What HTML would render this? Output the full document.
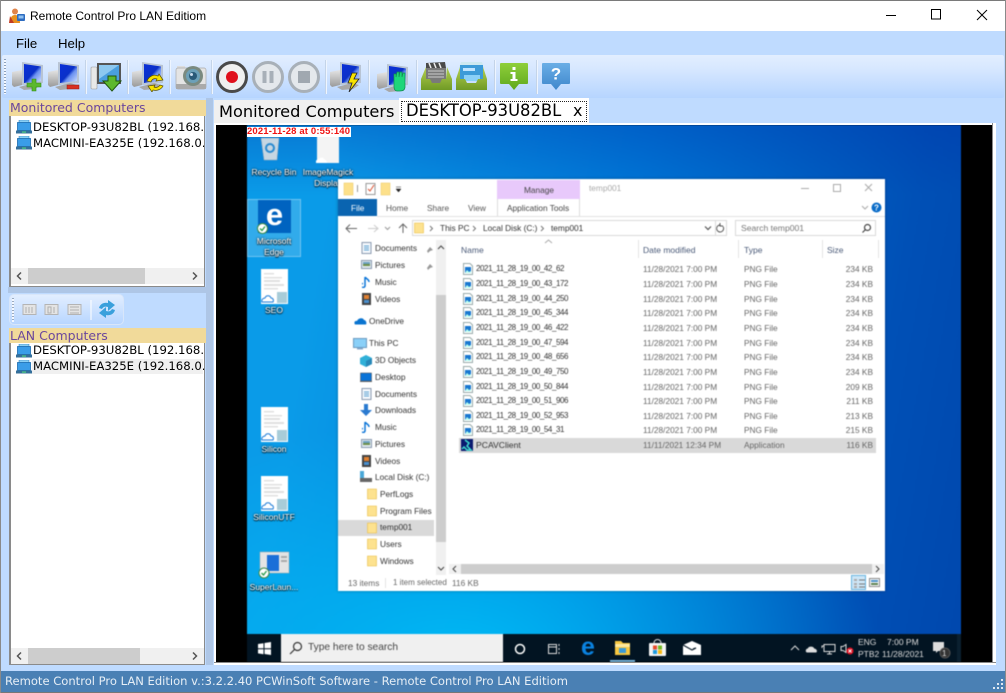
<!DOCTYPE html>
<html><head><meta charset="utf-8"><title>Remote Control Pro LAN Editiom</title>
<style>
html,body{margin:0;padding:0;width:1006px;height:693px;overflow:hidden;background:#bfdbff}
*{box-sizing:border-box}
.a,.t,svg.i{position:absolute}
.t{white-space:nowrap}
body{font-family:"Liberation Sans",sans-serif}
.d{font-family:"DejaVu Sans",sans-serif}
#remote{position:absolute;left:216px;top:125px;width:776px;height:537px;background:#000;overflow:hidden}
#inner{position:absolute;left:-216px;top:-125px;width:1006px;height:693px;filter:blur(.42px)}
#inner .t{font-size:8.3px;line-height:12px;color:#333}
#inner .l{color:#fff;text-shadow:0 0 2px #000,0 1px 1px #000;text-align:center;width:60px;font-size:8.5px}
#inner .g{color:#666}
#inner .b{color:#4a5a78;font-size:8.5px}
#inner .n{font-size:8px;letter-spacing:-.42px}
#inner .s{width:30px;left:843px;text-align:right}
.sep{position:absolute;top:60px;width:2px;height:34px;background:#eef5ff;border-left:1px solid #c4d4e8}
</style></head><body>
<svg width="0" height="0" style="position:absolute"><defs>
<linearGradient id="scr" x1="0" y1="0" x2="1" y2="1"><stop offset="0" stop-color="#0a30d8"/><stop offset=".5" stop-color="#0a30c8"/><stop offset=".62" stop-color="#6a90f0"/><stop offset="1" stop-color="#cfe0ff"/></linearGradient>
<linearGradient id="gry" x1="0" y1="0" x2="0" y2="1"><stop offset="0" stop-color="#e4e4e4"/><stop offset="1" stop-color="#9a9a9a"/></linearGradient>
<linearGradient id="tray" x1="0" y1="0" x2="0" y2="1"><stop offset="0" stop-color="#b5cf50"/><stop offset="1" stop-color="#6f9a25"/></linearGradient>
<linearGradient id="ig" x1="0" y1="0" x2="0" y2="1"><stop offset="0" stop-color="#8fcf3a"/><stop offset="1" stop-color="#5fa81e"/></linearGradient>
<linearGradient id="hb" x1="0" y1="0" x2="0" y2="1"><stop offset="0" stop-color="#6aaee6"/><stop offset="1" stop-color="#3f87cc"/></linearGradient>
<symbol id="pc" viewBox="0 0 32 32">
<path d="M0 12l10-2v15l-8 2-2-2z" fill="url(#gry)"/>
<path d="M10 2l21 3v18l-21 2z" fill="#b8c4d4"/>
<path d="M12 4l17 2.500v14.500l-17 2z" fill="url(#scr)"/>
<path d="M7 27l15-4 7 2-6 4-11 1z" fill="#a8a8a8"/>
</symbol>
<symbol id="fp" viewBox="0 0 10 12"><path d="M.5.500h6.500l2.500 2.500v8.500h-9z" fill="#fff" stroke="#9aa"/><rect x="2" y="4" width="6" height="6" fill="#1877d0"/><path d="M2 10l2-3 2 2 2-1v2z" fill="#bfe"/></symbol>
<symbol id="fo" viewBox="0 0 10 12"><path d="M.5 1h9v10h-9z" fill="#fcd770" stroke="#e8c050" stroke-width=".6"/><rect x="1" y="1.500" width="8" height="9" fill="#fde28f"/></symbol>
<symbol id="dc" viewBox="0 0 27 35"><rect width="27" height="35" fill="#fff"/><g fill="#e0e0e0"><rect x="3" y="4" width="10" height="1.500"/><rect x="3" y="8" width="18" height="1.500"/><rect x="3" y="11" width="16" height="2"/><rect x="3" y="15" width="20" height="2"/><rect x="3" y="19" width="14" height="1.500"/></g><rect x="16" y="23" width="10" height="11" fill="#a8ccd8"/><path d="M1 33c-1-3 2-4 3-4 1-3 5-3 6 0 2 0 3 2 2 4z" fill="#fff" stroke="#1a7ad8" stroke-width="1"/></symbol>
<symbol id="lpc" viewBox="0 0 16 14"><rect x="3" y="0" width="10" height="3" fill="#8ad0f5" stroke="#2a7ab8" stroke-width=".5"/><rect x="1.500" y="2.500" width="13" height="8" fill="#3a9de8" stroke="#1b6cb0" stroke-width=".8"/><rect x="0" y="10.500" width="16" height="3" fill="#356f9a"/><rect x="6" y="11.500" width="4" height="1.200" fill="#4fd080"/></symbol>
</defs></svg>

<!-- title bar -->
<div class="a" style="left:0;top:0;width:1006px;height:31px;background:#fff;border-top:1px solid #7a7a7a"></div>
<div class="a" style="left:0;top:0;width:1px;height:693px;background:#8a8a8a;z-index:9"></div>
<div class="a" style="left:1005px;top:0;width:1px;height:693px;background:#8a8a8a;z-index:9"></div>
<svg class="i" style="left:9px;top:8px" width="17" height="16" viewBox="0 0 17 16"><circle cx="6" cy="3.500" r="3" fill="#e0844a"/><path d="M1 15c0-6 2-8 5-8s5 2 5 8z" fill="#e8901e"/><path d="M1 8l4 7H0z" fill="#c23b22"/><rect x="8" y="6" width="8" height="7" rx="1" fill="#2d6cc0"/><rect x="9.500" y="7.500" width="5" height="3" fill="#8fc0f0"/></svg>
<div class="t" style="left:30px;top:9px;font-size:12px;line-height:14px;color:#000">Remote Control Pro LAN Editiom</div>
<svg class="i" style="left:885px;top:9px" width="110" height="13" viewBox="0 0 110 13" fill="none" stroke="#000"><path d="M1 6.500h10" /><rect x="46.500" y=".5" width="9" height="9.500" stroke-width="1"/><path d="M92 1l10 10M102 1l-10 10"/></svg>

<!-- menu -->
<div class="a" style="left:1px;top:31px;width:1004px;height:24px;background:#bfdbff"></div>
<div class="t" style="left:16px;top:36px;font-size:13.200px;line-height:15px;color:#000">File</div>
<div class="t" style="left:58px;top:36px;font-size:13.200px;line-height:15px;color:#000">Help</div>

<!-- toolbar -->
<div class="a" style="left:2px;top:55px;width:1002px;height:43px;background:linear-gradient(#e2eeff,#d8e8ff 30%,#b6d5ff);border-radius:2px"></div>
<div class="a" style="left:4px;top:59px;width:2px;height:35px;background:repeating-linear-gradient(#8ca0bc 0 1px,#f4f8ff 1px 3px)"></div>
<svg class="i" style="left:12px;top:60px" width="32" height="32"><use href="#pc"/><path d="M20 20h4v4h5v4h-5v4h-4v-4h-5v-4h5z" fill="#5cb82e" stroke="#2f8a18" stroke-width=".6" transform="translate(0,-1)"/></svg>
<svg class="i" style="left:48px;top:60px" width="32" height="32"><use href="#pc"/><rect x="19" y="25" width="12" height="4" fill="#d83020" stroke="#901810" stroke-width=".5"/></svg>
<div class="sep" style="left:85px"></div>
<svg class="i" style="left:90px;top:61px" width="32" height="32" viewBox="0 0 32 32"><rect x="1" y="6" width="6" height="22" rx="1" fill="#e8e8e8" stroke="#999" stroke-width=".6"/><rect x="7" y="2" width="24" height="21" fill="#555" /><rect x="9" y="4" width="20" height="17" fill="#4a9fe0"/><path d="M9 4h20L9 18z" fill="#8cc8f0"/><path d="M18 15h8v5h5L22 30l-9-10h5z" fill="#5cb82e" stroke="#20560e" stroke-width="1"/></svg>
<div class="sep" style="left:127px"></div>
<svg class="i" style="left:132px;top:60px" width="32" height="32"><use href="#pc"/><path d="M15 21c2-5 7-7 11-5l1-2 4 6-7 1 1-2c-3-1-5 0-6 3zM31 26c-2 4-7 5-10 4l-1 2-4-6 7-1-1 2c2 1 5 0 6-2z" fill="#f7e200" stroke="#5a5000" stroke-width=".7"/></svg>
<div class="sep" style="left:169px"></div>
<svg class="i" style="left:175px;top:62px" width="32" height="30" viewBox="0 0 32 30"><rect x="2" y="4" width="8" height="4" fill="#ddd"/><rect x="1" y="6" width="30" height="21" rx="2" fill="#e4e4e4" stroke="#aaa" stroke-width=".7"/><rect x="1" y="22" width="30" height="5" fill="#aaa"/><circle cx="18" cy="14" r="10" fill="#7a8a80"/><circle cx="18" cy="14" r="7" fill="#6ca0b8"/><circle cx="18" cy="14" r="4" fill="#2a5a78"/><circle cx="16.500" cy="12.500" r="1.500" fill="#cde"/></svg>
<div class="sep" style="left:211px"></div>
<svg class="i" style="left:215px;top:60px" width="106" height="34" viewBox="0 0 106 34">
<circle cx="17" cy="17" r="14.500" fill="#f0f0f0" stroke="#4a4a4a" stroke-width="3"/><circle cx="17" cy="17" r="6" fill="#e0101c"/>
<circle cx="53" cy="17" r="14.500" fill="#e4e8ec" stroke="#a8b0b8" stroke-width="3"/><rect x="47.500" y="11" width="4" height="12" fill="#a8b0b8"/><rect x="54.500" y="11" width="4" height="12" fill="#a8b0b8"/>
<circle cx="89" cy="17" r="14.500" fill="#e4e8ec" stroke="#a8b0b8" stroke-width="3"/><rect x="83" y="11" width="12" height="12" fill="#a0a8b0"/></svg>
<div class="sep" style="left:325px"></div>
<svg class="i" style="left:330px;top:60px" width="32" height="32"><use href="#pc"/><path d="M22 13l-4 10h4l-3 9 10-13h-5l3-6z" fill="#f7e200" stroke="#222" stroke-width=".8"/></svg>
<div class="sep" style="left:368px"></div>
<svg class="i" style="left:377px;top:62px" width="32" height="32"><use href="#pc"/><path d="M17 17v-5h2v3l1-5h2v5l1-5h2v5l1-4h2v14c0 3-2 4-5 4h-3c-2 0-3-2-3-4z" fill="#1ed67a" stroke="#128a50" stroke-width=".7"/></svg>
<div class="sep" style="left:416px"></div>
<svg class="i" style="left:421px;top:61px" width="31" height="32" viewBox="0 0 31 32"><path d="M5 2l19-1 1 6H5z" fill="#4a4a4a"/><path d="M8 2l2 5M13 2l2 5M18 2l2 5" stroke="#eee" stroke-width="1.500"/><rect x="5" y="7" width="20" height="15" fill="#7a7a7a"/><path d="M7 10h16M7 13h16M7 16h16" stroke="#ccc"/><path d="M5 6L0 18v11h31V18L26 6l-1 12h-4l-2 4h-8l-2-4H5z" fill="url(#tray)"/></svg>
<svg class="i" style="left:456px;top:61px" width="31" height="32" viewBox="0 0 31 32"><path d="M5 1h21l2 6H3z" fill="#cde8f0"/><rect x="4" y="4" width="23" height="16" fill="#3d9bd8"/><rect x="7" y="7" width="12" height="3" fill="#bfe4ff"/><rect x="8" y="14" width="16" height="6" fill="#8ad0f8"/><path d="M4 6L0 18v11h31V18L27 6v12h-5l-2 4h-9l-2-4H4z" fill="url(#tray)"/></svg>
<div class="sep" style="left:494px"></div>
<svg class="i" style="left:500px;top:63px" width="28" height="28" viewBox="0 0 28 28"><path d="M1 0h26a1 1 0 011 1v19a1 1 0 01-1 1h-8l-5 6-5-6H1a1 1 0 01-1-1V1a1 1 0 011-1z" fill="url(#ig)"/><rect x="12.500" y="4" width="3" height="3" fill="#fff"/><path d="M10.500 9h5v7h2v2h-7v-2h2v-5h-2z" fill="#fff"/></svg>
<div class="sep" style="left:536px"></div>
<svg class="i" style="left:542px;top:63px" width="28" height="28" viewBox="0 0 28 28"><path d="M1 0h26a1 1 0 011 1v19a1 1 0 01-1 1h-8l-5 6-5-6H1a1 1 0 01-1-1V1a1 1 0 011-1z" fill="url(#hb)"/><text x="14" y="16.500" font-size="17" font-weight="bold" text-anchor="middle" fill="#fff" font-family="Liberation Sans">?</text></svg>

<!-- left panels -->
<div class="a" style="left:206px;top:98px;width:7px;height:567px;background:#aec6e6"></div>
<div class="a" style="left:9px;top:100px;width:197px;height:16px;background:#f1da9a"></div>
<div class="t d" style="left:10px;top:100px;font-size:12.500px;line-height:16px;color:#6b479c">Monitored Computers</div>
<div class="a" style="left:9px;top:116px;width:196px;height:171px;background:#fff;border:1px solid #8a8a8a;border-top:0;border-left:2px solid #8a8a8a"></div>
<svg class="i" style="left:16px;top:120px" width="16" height="14"><use href="#lpc"/></svg>
<svg class="i" style="left:16px;top:136px" width="16" height="14"><use href="#lpc"/></svg>
<div class="a" style="left:33px;top:120px;width:171px;height:32px;overflow:hidden"><div class="t d" style="left:0;top:0;font-size:11.700px;line-height:15px;color:#000">DESKTOP-93U82BL (192.168.0.101)</div><div class="t d" style="left:0;top:16px;font-size:11.700px;line-height:15px;color:#000">MACMINI-EA325E (192.168.0.102)</div></div>
<div class="a" style="left:11px;top:268px;width:193px;height:16px;background:#f0f0f0"></div>
<div class="a" style="left:28px;top:268px;width:117px;height:16px;background:#cdcdcd"></div>
<svg class="i" style="left:11px;top:268px" width="193" height="16" fill="none" stroke="#555" stroke-width="1.500"><path d="M10 4.500L6.500 8l3.500 3.500M182 4.500l3.500 3.500-3.500 3.500"/></svg>

<div class="a" style="left:8px;top:287px;width:198px;height:6px;background:#aec6e6"></div>
<div class="a" style="left:9px;top:294px;width:115px;height:31px;border-radius:5px;background:linear-gradient(#e2eeff,#b8d6ff);border:1px solid #d8e6fa"></div>
<div class="a" style="left:12px;top:298px;width:2px;height:24px;background:repeating-linear-gradient(#9aaac0 0 1px,#f4f8ff 1px 3px)"></div>
<svg class="i" style="left:20px;top:300px" width="100" height="20" viewBox="0 0 100 20"><g fill="#e4e4e4" stroke="#b4b4b4"><rect x="3" y="4.500" width="13" height="10"/><rect x="25" y="4.500" width="13" height="10"/><rect x="48" y="4.500" width="13" height="10"/></g><path d="M6 7v6M9 7v6M12 7v6M28 7v6h3V7zM34 7v6M50 7h9M50 10h9M50 13h9" stroke="#b0b0b0" fill="none"/><rect x="70.500" y="-2" width="1" height="22" fill="#fff" /><path d="M79 8c1-4 5-6 9-5V0l7 5-7 6V7c-3-1-5 0-6 2zM95 10c-1 4-5 6-9 5v3l-7-5 7-6v4c3 1 5 0 6-2z" fill="#3aa0dc"/></svg>

<div class="a" style="left:9px;top:328px;width:197px;height:15px;background:#f1da9a"></div>
<div class="t d" style="left:10px;top:328px;font-size:12.500px;line-height:16px;color:#6b479c">LAN Computers</div>
<div class="a" style="left:9px;top:343px;width:196px;height:322px;background:#fff;border:1px solid #8a8a8a;border-top:0;border-left:2px solid #8a8a8a"></div>
<div class="a" style="left:32px;top:359px;width:171px;height:15px;background:#f0f0f0"></div>
<svg class="i" style="left:16px;top:344px" width="16" height="14"><use href="#lpc"/></svg>
<svg class="i" style="left:16px;top:360px" width="16" height="14"><use href="#lpc"/></svg>
<div class="a" style="left:33px;top:343px;width:171px;height:32px;overflow:hidden"><div class="t d" style="left:0;top:0;font-size:11.700px;line-height:15px;color:#000">DESKTOP-93U82BL (192.168.0.101)</div><div class="t d" style="left:0;top:16px;font-size:11.700px;line-height:15px;color:#000">MACMINI-EA325E (192.168.0.102)</div></div>
<div class="a" style="left:11px;top:648px;width:193px;height:16px;background:#f0f0f0"></div>
<div class="a" style="left:28px;top:648px;width:112px;height:16px;background:#cdcdcd"></div>
<svg class="i" style="left:11px;top:648px" width="193" height="16" fill="none" stroke="#555" stroke-width="1.500"><path d="M10 4.500L6.500 8l3.500 3.500M182 4.500l3.500 3.500-3.500 3.500"/></svg>

<!-- tabs -->
<div class="a" style="left:214px;top:100px;width:186px;height:25px;background:#f0f0f0"></div>
<div class="t d" style="left:219px;top:102px;font-size:16.200px;line-height:20px;color:#000">Monitored Computers</div>
<div class="a" style="left:399px;top:98px;width:190px;height:27px;background:#fff"></div>
<div class="a" style="left:401px;top:101px;width:186px;height:21px;border:1px dotted #222"></div>
<div class="t d" style="left:406px;top:101px;font-size:16.400px;line-height:20px;color:#000">DESKTOP-93U82BL</div>
<div class="t d" style="left:573px;top:101px;font-size:16px;line-height:20px;color:#000">x</div>
<div class="a" style="left:214px;top:123px;width:782px;height:542px;background:#fff"></div>

<!-- remote screen -->
<div id="remote"><div id="inner">
<div class="a" style="left:247px;top:125px;width:714px;height:509px;background:radial-gradient(420px 240px at 30% 105%,#00baf5 0,rgba(0,170,240,0) 100%),linear-gradient(100deg,#0a9be8 0,#0a9be8 12%,#0076d6 50%,#0050b6 85%,#0048ae 100%)"></div>
<div class="a" style="left:247px;top:125px;width:714px;height:70px;background:linear-gradient(rgba(0,50,170,.32),rgba(0,60,180,0))"></div>

<!-- desktop icons -->
<svg class="i" style="left:260px;top:136px" width="20" height="25" viewBox="0 0 20 25"><path d="M1 2h18l-2 22H4z" fill="#c6d6e2" stroke="#8fa4b6" stroke-width=".5"/><circle cx="10" cy="12" r="4" fill="none" stroke="#2a8ad0" stroke-width="2"/></svg>
<div class="t l" style="left:244px;top:166px">Recycle Bin</div>
<svg class="i" style="left:316px;top:136px" width="24" height="27" viewBox="0 0 24 27"><rect x="1" width="22" height="27" fill="#f4f4f4"/><path d="M0 27c-1-3 2-4 3-4 1-2 5-2 6 1 1 0 2 1 2 3z" fill="#fff"/></svg>
<div class="t l" style="left:298px;top:166px">ImageMagick</div>
<div class="t l" style="left:298px;top:177px">Display</div>
<div class="a" style="left:247px;top:199px;width:54px;height:58px;background:rgba(255,255,255,.16);border:1px solid rgba(255,255,255,.3)"></div>
<div class="a" style="left:258px;top:200px;width:33px;height:33px;background:#0063c0"></div>
<div class="t" style="left:258px;top:198px;width:33px;height:33px;font:bold 31px/33px 'Liberation Sans';text-align:center"><span style="color:#fff;font-size:31px">e</span></div>
<svg class="i" style="left:257px;top:223px" width="11" height="11"><circle cx="5.500" cy="5.500" r="5" fill="#fff" stroke="#3a8a4a"/><path d="M3 5.500l2 2 3-4" stroke="#2a9a4a" fill="none" stroke-width="1.300"/></svg>
<div class="t l" style="left:244px;top:235px">Microsoft</div>
<div class="t l" style="left:244px;top:246px">Edge</div>
<svg class="i" style="left:261px;top:269px" width="27" height="35"><use href="#dc"/></svg>
<div class="t l" style="left:244px;top:304px">SEO</div>
<svg class="i" style="left:261px;top:407px" width="27" height="35"><use href="#dc"/></svg>
<div class="t l" style="left:244px;top:443px">Silicon</div>
<svg class="i" style="left:261px;top:476px" width="27" height="35"><use href="#dc"/></svg>
<div class="t l" style="left:244px;top:511px">SiliconUTF</div>
<svg class="i" style="left:258px;top:551px" width="32" height="28" viewBox="0 0 32 28"><rect x="2" y="1" width="29" height="21" fill="#e4e4e4" stroke="#aaa" stroke-width=".5"/><rect x="9" y="4" width="12" height="16" fill="#1a6fd8"/><rect x="23" y="5" width="6" height="2" fill="#aaa"/><rect x="23" y="9" width="6" height="2" fill="#aaa"/><circle cx="6" cy="22" r="5" fill="#fff" stroke="#3a8a4a"/><path d="M3.500 22l2 2 3-4" stroke="#2a9a4a" fill="none" stroke-width="1.300"/></svg>
<div class="t l" style="left:244px;top:581px">SuperLaun...</div>

<!-- explorer -->
<div class="a" style="left:338px;top:179px;width:547px;height:412px;background:#fff;box-shadow:0 0 3px rgba(0,0,0,.3)"></div>
<svg class="i" style="left:343px;top:182px" width="64" height="14" viewBox="0 0 64 14"><rect x="1" y="1" width="9" height="12" fill="#fde08a" stroke="#eac860" stroke-width=".5"/><rect x="14" y="3" width="1" height="7" fill="#999"/><rect x="23" y="1.500" width="9" height="11" fill="#fff" stroke="#999"/><path d="M25 7l2 2 4-6" fill="none" stroke="#d85030"/><rect x="38" y="1" width="9" height="12" fill="#fde08a" stroke="#eac860" stroke-width=".5"/><path d="M53 5h5M53 7h5l-2.500 3z" fill="#222" stroke="#222" stroke-width=".5"/></svg>
<div class="a" style="left:497px;top:180px;width:83px;height:19px;background:#e8c9fb"></div>
<div class="t" style="left:524px;top:184px;color:#444">Manage</div>
<div class="t" style="left:589px;top:182px;color:#aaa">temp001</div>
<svg class="i" style="left:800px;top:182px" width="80" height="12" fill="none" stroke="#aaa"><path d="M1 6.500h8M33.500 2.500h7v7h-7zM65 2l7 7M72 2l-7 7"/></svg>
<div class="a" style="left:338px;top:199px;width:39px;height:17px;background:#0a64b0"></div>
<div class="t" style="left:351px;top:202px;color:#fff">File</div>
<div class="t" style="left:386px;top:202px;color:#555">Home</div>
<div class="t" style="left:427px;top:202px;color:#555">Share</div>
<div class="t" style="left:468px;top:202px;color:#555">View</div>
<div class="t" style="left:507px;top:202px;color:#444">Application Tools</div>
<div class="a" style="left:497px;top:199px;width:1px;height:17px;background:#ddd"></div>
<div class="a" style="left:579px;top:199px;width:1px;height:17px;background:#ddd"></div>
<div class="a" style="left:377px;top:216px;width:508px;height:1px;background:#e2e2e2"></div>
<svg class="i" style="left:861px;top:201px" width="22" height="14"><path d="M1 5l3 3 3-3" fill="none" stroke="#aaa"/><circle cx="15.500" cy="6.500" r="5" fill="#0a6cc8"/><text x="15.500" y="9.500" font-size="8" font-weight="bold" fill="#fff" text-anchor="middle" font-family="Liberation Sans">?</text></svg>
<!-- address -->
<svg class="i" style="left:344px;top:222px" width="66" height="13" fill="none" stroke="#666"><path d="M2 6.500h11M6 2.500l-4 4 4 4M59 11V2M55 6l4-4 4 4"/><path d="M24 6.500h10M30 3l4 3.500-4 3.500" stroke="#ccc"/><path d="M41 5l2.500 2.500L46 5" stroke="#999"/></svg>
<div class="a" style="left:412px;top:220px;width:315px;height:16px;border:1px solid #d9d9d9"></div>
<div class="a" style="left:715px;top:220px;width:1px;height:16px;background:#d9d9d9"></div>
<svg class="i" style="left:414px;top:222px" width="10" height="12"><use href="#fo"/></svg>
<svg class="i" style="left:428px;top:222px" width="125" height="12" fill="none" stroke="#777"><path d="M2 4l2.500 2.500L2 9M45 4l2.500 2.500L45 9M113 4l2.500 2.500L113 9"/></svg>
<div class="t" style="left:440px;top:222px">This PC</div>
<div class="t" style="left:483px;top:222px">Local Disk (C:)</div>
<div class="t" style="left:551px;top:222px">temp001</div>
<svg class="i" style="left:704px;top:222px" width="22" height="12" fill="none" stroke="#555"><path d="M1 4.500l3 3 3-3" stroke-width="1.200"/><path d="M19 4.500a3.500 3.500 0 11-3-1.500M16 1v3h3"/></svg>
<div class="a" style="left:735px;top:220px;width:141px;height:16px;border:1px solid #d9d9d9"></div>
<div class="t" style="left:741px;top:222px;color:#777;font-size:8.600px">Search temp001</div>
<svg class="i" style="left:861px;top:223px" width="11" height="11" fill="none" stroke="#444" stroke-width="1.200"><circle cx="6.500" cy="4.500" r="3"/><path d="M4.500 6.500l-3 3"/></svg>
<!-- headers -->
<svg class="i" style="left:544px;top:239px" width="9" height="5" fill="none" stroke="#aaa"><path d="M1 4l3.500-3L8 4"/></svg>
<div class="t b" style="left:461px;top:244px">Name</div>
<div class="t b" style="left:643px;top:244px">Date modified</div>
<div class="t b" style="left:744px;top:244px">Type</div>
<div class="t b" style="left:827px;top:244px">Size</div>
<div class="a" style="left:638px;top:240px;width:1px;height:18px;background:#e4e4e4"></div>
<div class="a" style="left:738px;top:240px;width:1px;height:18px;background:#e4e4e4"></div>
<div class="a" style="left:822px;top:240px;width:1px;height:18px;background:#e4e4e4"></div>
<div class="a" style="left:878px;top:240px;width:1px;height:18px;background:#e4e4e4"></div>
<!-- rows -->
<div class="a" style="left:459px;top:438px;width:417px;height:15px;background:#d9d9d9"></div>
<svg class="i" style="left:463px;top:263px" width="10" height="12"><use href="#fp"/></svg><div class="t n" style="left:476px;top:263px">2021_11_28_19_00_42_62</div><div class="t g" style="left:643px;top:263px">11/28/2021 7:00 PM</div><div class="t g" style="left:744px;top:263px">PNG File</div><div class="t g s" style="top:263px">234 KB</div>
<svg class="i" style="left:463px;top:278px" width="10" height="12"><use href="#fp"/></svg><div class="t n" style="left:476px;top:278px">2021_11_28_19_00_43_172</div><div class="t g" style="left:643px;top:278px">11/28/2021 7:00 PM</div><div class="t g" style="left:744px;top:278px">PNG File</div><div class="t g s" style="top:278px">234 KB</div>
<svg class="i" style="left:463px;top:293px" width="10" height="12"><use href="#fp"/></svg><div class="t n" style="left:476px;top:293px">2021_11_28_19_00_44_250</div><div class="t g" style="left:643px;top:293px">11/28/2021 7:00 PM</div><div class="t g" style="left:744px;top:293px">PNG File</div><div class="t g s" style="top:293px">234 KB</div>
<svg class="i" style="left:463px;top:307px" width="10" height="12"><use href="#fp"/></svg><div class="t n" style="left:476px;top:307px">2021_11_28_19_00_45_344</div><div class="t g" style="left:643px;top:307px">11/28/2021 7:00 PM</div><div class="t g" style="left:744px;top:307px">PNG File</div><div class="t g s" style="top:307px">234 KB</div>
<svg class="i" style="left:463px;top:322px" width="10" height="12"><use href="#fp"/></svg><div class="t n" style="left:476px;top:322px">2021_11_28_19_00_46_422</div><div class="t g" style="left:643px;top:322px">11/28/2021 7:00 PM</div><div class="t g" style="left:744px;top:322px">PNG File</div><div class="t g s" style="top:322px">234 KB</div>
<svg class="i" style="left:463px;top:337px" width="10" height="12"><use href="#fp"/></svg><div class="t n" style="left:476px;top:337px">2021_11_28_19_00_47_594</div><div class="t g" style="left:643px;top:337px">11/28/2021 7:00 PM</div><div class="t g" style="left:744px;top:337px">PNG File</div><div class="t g s" style="top:337px">234 KB</div>
<svg class="i" style="left:463px;top:351px" width="10" height="12"><use href="#fp"/></svg><div class="t n" style="left:476px;top:351px">2021_11_28_19_00_48_656</div><div class="t g" style="left:643px;top:351px">11/28/2021 7:00 PM</div><div class="t g" style="left:744px;top:351px">PNG File</div><div class="t g s" style="top:351px">234 KB</div>
<svg class="i" style="left:463px;top:366px" width="10" height="12"><use href="#fp"/></svg><div class="t n" style="left:476px;top:366px">2021_11_28_19_00_49_750</div><div class="t g" style="left:643px;top:366px">11/28/2021 7:00 PM</div><div class="t g" style="left:744px;top:366px">PNG File</div><div class="t g s" style="top:366px">234 KB</div>
<svg class="i" style="left:463px;top:381px" width="10" height="12"><use href="#fp"/></svg><div class="t n" style="left:476px;top:381px">2021_11_28_19_00_50_844</div><div class="t g" style="left:643px;top:381px">11/28/2021 7:00 PM</div><div class="t g" style="left:744px;top:381px">PNG File</div><div class="t g s" style="top:381px">209 KB</div>
<svg class="i" style="left:463px;top:395px" width="10" height="12"><use href="#fp"/></svg><div class="t n" style="left:476px;top:395px">2021_11_28_19_00_51_906</div><div class="t g" style="left:643px;top:395px">11/28/2021 7:00 PM</div><div class="t g" style="left:744px;top:395px">PNG File</div><div class="t g s" style="top:395px">211 KB</div>
<svg class="i" style="left:463px;top:410px" width="10" height="12"><use href="#fp"/></svg><div class="t n" style="left:476px;top:410px">2021_11_28_19_00_52_953</div><div class="t g" style="left:643px;top:410px">11/28/2021 7:00 PM</div><div class="t g" style="left:744px;top:410px">PNG File</div><div class="t g s" style="top:410px">213 KB</div>
<svg class="i" style="left:463px;top:424px" width="10" height="12"><use href="#fp"/></svg><div class="t n" style="left:476px;top:424px">2021_11_28_19_00_54_31</div><div class="t g" style="left:643px;top:424px">11/28/2021 7:00 PM</div><div class="t g" style="left:744px;top:424px">PNG File</div><div class="t g s" style="top:424px">215 KB</div>
<svg class="i" style="left:461px;top:439px" width="12" height="12"><rect width="12" height="12" fill="#0a1a70"/><path d="M4 1l4 3-2 3 4 4H6L3 8 1 10" stroke="#3fe0d0" fill="none" stroke-width="1.500"/></svg><div class="t" style="left:476px;top:439px;font-size:8.600px">PCAVClient</div><div class="t g" style="left:643px;top:439px">11/11/2021 12:34 PM</div><div class="t g" style="left:744px;top:439px">Application</div><div class="t g s" style="top:439px">116 KB</div>
<!-- nav -->
<div class="a" style="left:338px;top:520px;width:96px;height:16px;background:#d9d9d9"></div>
<svg class="i" style="left:361px;top:242px" width="11" height="12"><rect x="1" y="0.500" width="9" height="11" fill="#f4f8fc" stroke="#8a9ab0"/><path d="M3 4h5M3 6h5M3 8h5" stroke="#5aa0d0"/></svg><div class="t" style="left:375px;top:242px">Documents</div>
<svg class="i" style="left:361px;top:259px" width="11" height="12"><rect x=".5" y="1.500" width="10" height="8" fill="#dfe8ee" stroke="#8a9ab0"/><rect x="2" y="3" width="7" height="2" fill="#6aa0c0"/><rect x="2" y="5" width="7" height="2" fill="#6f8f4a"/></svg><div class="t" style="left:375px;top:259px">Pictures</div>
<svg class="i" style="left:362px;top:276px" width="9" height="12"><path d="M3 1v8a2 2 0 11-2-1.500M3 1c1 2 4 2 4 5" fill="none" stroke="#0a74d8" stroke-width="1.500"/></svg><div class="t" style="left:375px;top:276px">Music</div>
<svg class="i" style="left:361px;top:293px" width="11" height="12"><rect x="1" y="0" width="9" height="12" fill="#444"/><rect x="3" y="2" width="5" height="4" fill="#e08030"/><rect x="3" y="7" width="5" height="3" fill="#4a90d0"/></svg><div class="t" style="left:375px;top:293px">Videos</div>
<svg class="i" style="left:425px;top:244px" width="9" height="26" fill="#999"><path d="M2 7l3-4 3 3-3 1-2 2zM2 24l3-4 3 3-3 1-2 2z"/></svg>
<svg class="i" style="left:354px;top:317px" width="13" height="8"><path d="M1 7.500c-1.500-2 0-4 2-3.500 1-3 6-4 7-1 2 0 3 3 2 4.500z" fill="#0a74d0"/></svg><div class="t" style="left:369px;top:315px">OneDrive</div>
<svg class="i" style="left:353px;top:338px" width="14" height="12"><rect x=".5" y=".5" width="13" height="9" fill="#8ad0f8" stroke="#6a9ac0"/><rect x="4" y="10" width="6" height="1.500" fill="#8ac"/></svg><div class="t" style="left:369px;top:337px">This PC</div>
<svg class="i" style="left:360px;top:355px" width="12" height="12"><path d="M6 0l6 3v6l-6 3-6-3V3z" fill="#30b0d8"/><path d="M6 12V6l6-3v6z" fill="#2888b8"/></svg><div class="t" style="left:375px;top:354px">3D Objects</div>
<svg class="i" style="left:360px;top:372px" width="12" height="11"><rect x=".5" y="1" width="11" height="8" fill="#0a74d8" stroke="#444" stroke-width=".5"/><rect x="0" y="9" width="12" height="1" fill="#666"/></svg><div class="t" style="left:375px;top:371px">Desktop</div>
<svg class="i" style="left:361px;top:388px" width="11" height="12"><rect x="1" y="0.500" width="9" height="11" fill="#f4f8fc" stroke="#8a9ab0"/><path d="M3 4h5M3 6h5M3 8h5" stroke="#5aa0d0"/></svg><div class="t" style="left:375px;top:388px">Documents</div>
<svg class="i" style="left:360px;top:404px" width="12" height="12"><path d="M4 0h4v6h4l-6 6-6-6h4z" fill="#2a7ad0"/></svg><div class="t" style="left:375px;top:404px">Downloads</div>
<svg class="i" style="left:362px;top:421px" width="9" height="12"><path d="M3 1v8a2 2 0 11-2-1.500M3 1c1 2 4 2 4 5" fill="none" stroke="#0a74d8" stroke-width="1.500"/></svg><div class="t" style="left:375px;top:421px">Music</div>
<svg class="i" style="left:361px;top:438px" width="11" height="12"><rect x=".5" y="1.500" width="10" height="8" fill="#dfe8ee" stroke="#8a9ab0"/><rect x="2" y="3" width="7" height="2" fill="#6aa0c0"/><rect x="2" y="5" width="7" height="2" fill="#6f8f4a"/></svg><div class="t" style="left:375px;top:438px">Pictures</div>
<svg class="i" style="left:361px;top:455px" width="11" height="12"><rect x="1" y="0" width="9" height="12" fill="#444"/><rect x="3" y="2" width="5" height="4" fill="#e08030"/><rect x="3" y="7" width="5" height="3" fill="#4a90d0"/></svg><div class="t" style="left:375px;top:455px">Videos</div>
<svg class="i" style="left:360px;top:471px" width="12" height="12"><rect x="0" y="0" width="4" height="7" fill="#4aa8d8"/><rect x="0" y="7" width="12" height="4" fill="#666"/></svg><div class="t" style="left:375px;top:471px">Local Disk (C:)</div>
<svg class="i" style="left:367px;top:488px" width="10" height="12"><use href="#fo"/></svg><div class="t" style="left:380px;top:488px">PerfLogs</div>
<svg class="i" style="left:367px;top:505px" width="10" height="12"><use href="#fo"/></svg><div class="t" style="left:380px;top:505px">Program Files</div>
<svg class="i" style="left:367px;top:522px" width="10" height="12"><use href="#fo"/></svg><div class="t" style="left:380px;top:521px">temp001</div>
<svg class="i" style="left:367px;top:538px" width="10" height="12"><use href="#fo"/></svg><div class="t" style="left:380px;top:538px">Users</div>
<svg class="i" style="left:367px;top:555px" width="10" height="12"><use href="#fo"/></svg><div class="t" style="left:380px;top:555px">Windows</div>
<!-- scrollbars -->
<div class="a" style="left:436px;top:240px;width:10px;height:335px;background:#f0f0f0"></div>
<div class="a" style="left:436px;top:295px;width:10px;height:247px;background:#cdcdcd"></div>
<svg class="i" style="left:436px;top:243px" width="10" height="332" fill="none" stroke="#444"><path d="M2 6l3-3 3 3M2 324l3 3 3-3"/></svg>
<div class="a" style="left:449px;top:564px;width:435px;height:10px;background:#f0f0f0"></div>
<div class="a" style="left:461px;top:564px;width:411px;height:10px;background:#cdcdcd"></div>
<svg class="i" style="left:449px;top:564px" width="435" height="10" fill="none" stroke="#444"><path d="M7 2L4 5l3 3M427 2l3 3-3 3"/></svg>
<div class="t g" style="left:348px;top:577px">13 items</div>
<div class="t g" style="left:393px;top:577px;font-size:8px">1 item selected</div>
<div class="t g" style="left:452px;top:577px">116 KB</div>
<div class="a" style="left:385px;top:578px;width:1px;height:10px;background:#e4e4e4"></div>
<div class="a" style="left:851px;top:575px;width:15px;height:15px;background:#cde6f7;border:1px solid #68b4e0"></div>
<svg class="i" style="left:853px;top:577px" width="28" height="12"><path d="M1 2h3v2H1zM1 6h3v2H1zM1 9h3v2H1z" fill="#aaa"/><path d="M6 3h6M6 7h6M6 10h6" stroke="#777"/><rect x="16.500" y="1.500" width="10" height="8" fill="#fff" stroke="#888"/><rect x="18" y="3" width="7" height="2" fill="#4a90c8"/><rect x="18" y="6" width="7" height="2" fill="#5a8050"/></svg>

<!-- taskbar -->
<div class="a" style="left:247px;top:634px;width:710px;height:28px;background:#021422"></div>
<svg class="i" style="left:258px;top:642px" width="13" height="13" fill="#fff"><path d="M0 2l5.500-.8v5H0zM6.500 1L13 0v6.200H6.500zM0 7.200h5.500v5L0 11.400zM6.500 7.200H13V13l-6.500-1z"/></svg>
<div class="a" style="left:281px;top:634px;width:222px;height:28px;background:#f0f0f0"></div>
<svg class="i" style="left:289px;top:641px" width="14" height="14" fill="none" stroke="#333" stroke-width="1.200"><circle cx="8.500" cy="5.500" r="4"/><path d="M5.500 8.500L1 13"/></svg>
<div class="t" style="left:308px;top:642px;font-size:10.200px;color:#444">Type here to search</div>
<svg class="i" style="left:513px;top:642px" width="14" height="14" fill="none" stroke="#fff" stroke-width="1.500"><circle cx="7" cy="7" r="4.500"/></svg>
<svg class="i" style="left:547px;top:642px" width="15" height="14" fill="none" stroke="#ddd"><path d="M1.500 2.500h8v9h-8zM1 5h9M12 2v2M12 6v2M12 10v2"/></svg>
<div class="t" style="left:581px;top:634px;font:bold 25px/26px 'Liberation Sans'"><span style="color:#0a82e0;font-size:25px">e</span></div>
<svg class="i" style="left:615px;top:641px" width="15" height="14"><path d="M0 0h6l2 2h7v12H0z" fill="#f8c840"/><rect x="0" y="3" width="15" height="3" fill="#fde9a0"/><rect x="4" y="7" width="7" height="5" fill="#3a9ad8"/></svg>
<div class="a" style="left:610px;top:660px;width:25px;height:2px;background:#7ab8e0"></div>
<svg class="i" style="left:649px;top:639px" width="17" height="17"><path d="M5 4a3.500 3.500 0 017 0" fill="none" stroke="#ddd"/><rect y="4" width="17" height="13" rx="1" fill="#f4f4f4"/><rect x="4" y="6.500" width="4" height="4" fill="#e84a2a"/><rect x="9" y="6.500" width="4" height="4" fill="#70b820"/><rect x="4" y="11" width="4" height="4" fill="#1a9ae0"/><rect x="9" y="11" width="4" height="4" fill="#f8b810"/></svg>
<svg class="i" style="left:683px;top:641px" width="18" height="14"><path d="M0 4L9 0l9 4v10H0z" fill="#fff"/><path d="M0 4l9 5 4-2-3 1" fill="none" stroke="#021422" stroke-width="1.200"/></svg>
<svg class="i" style="left:790px;top:642px" width="65" height="13" fill="none" stroke="#ddd"><path d="M1 8l4-4 4 4" /><path d="M17 10c-1.500-1-.5-3 1-3 1-2.500 5-2.500 6 0 2 0 3 2 2 3z" fill="#ddd"/><path d="M34 2.500h11v7H34zM39.500 9.500v2.500M37 12h5M34 4h-2v2"/><path d="M51 4.500h2l3-2v8l-3-2h-2z"/></svg>
<svg class="i" style="left:846px;top:647px" width="8" height="8"><circle cx="4" cy="4" r="3.500" fill="#e01020"/><path d="M2.500 2.500l3 3M5.500 2.500l-3 3" stroke="#fff"/></svg>
<div class="t" style="left:858px;top:636px;color:#ddd;font-size:8.500px">ENG</div>
<div class="t" style="left:858px;top:648px;color:#ddd;font-size:8.500px">PTB2</div>
<div class="t" style="left:887px;top:636px;color:#ddd;font-size:8.500px">7:00 PM</div>
<div class="t" style="left:882px;top:648px;color:#ddd;font-size:8.500px">11/28/2021</div>
<svg class="i" style="left:932px;top:641px" width="20" height="18"><path d="M1 1h11v9H6l-2 2v-2H1z" fill="#ddd"/><circle cx="13" cy="12" r="5" fill="#333" stroke="#555"/></svg>
<div class="t" style="left:942px;top:648px;color:#ddd;font-size:8px">1</div>
<div class="a" style="left:957px;top:634px;width:4px;height:28px;background:#0b2030"></div>
</div>
<div class="a" style="left:31px;top:2px;width:104px;height:10px;background:#fff"></div>
<div class="t" style="left:31px;top:1px;width:104px;font:bold 9.500px/12px 'Liberation Sans';color:#f01010;letter-spacing:.15px">2021-11-28 at 0:55:140</div>
</div>
<div class="a" style="left:214px;top:662px;width:782px;height:1px;background:#888"></div>
<div class="a" style="left:992px;top:123px;width:1px;height:540px;background:#888"></div>

<!-- status -->
<div class="a" style="left:1px;top:671px;width:1004px;height:21px;background:#4a80b4"></div>
<div class="a" style="left:0;top:692px;width:1006px;height:1px;background:#777"></div>
<div class="t d" style="left:5px;top:674px;font-size:11.560px;line-height:15px;color:#e6eef6">Remote Control Pro LAN Edition v.:3.2.2.40 PCWinSoft Software - Remote Control Pro LAN Editiom</div>
<svg class="i" style="left:992px;top:678px" width="12" height="13" fill="#dfe8f2"><path d="M9 1h2v2H9zM5 5h2v2H5zM9 5h2v2H9zM1 9h2v2H1zM5 9h2v2H5zM9 9h2v2H9z"/></svg>
</body></html>
